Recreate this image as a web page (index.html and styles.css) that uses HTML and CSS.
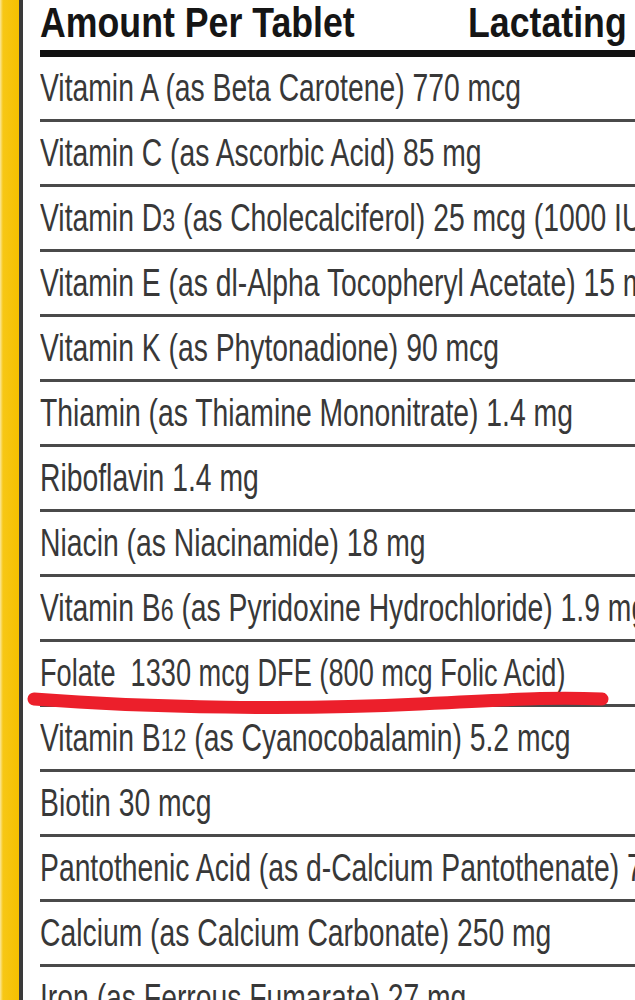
FILE: index.html
```html
<!DOCTYPE html>
<html>
<head>
  <meta charset="utf-8" />
  <title>Supplement Facts</title>
  <meta name="viewport" content="width=device-width, initial-scale=1">
  <link rel="stylesheet" href="styles.css">
</head>
<body>
  <div class="label">
    <div class="edge"></div>
    <div class="edge-rule"></div>
    <div class="panel">
      <div class="head">
        <span class="head-text">Amount Per Tablet</span>
        <span class="head-text head-right">Lactating</span>
      </div>
      <div class="row"><span class="txt">Vitamin A (as Beta Carotene) 770 mcg</span></div>
      <div class="row"><span class="txt">Vitamin C (as Ascorbic Acid) 85 mg</span></div>
      <div class="row"><span class="txt">Vitamin D<span class="sub">3</span> (as Cholecalciferol) 25 mcg (1000 IU)</span></div>
      <div class="row"><span class="txt">Vitamin E (as dl-Alpha Tocopheryl Acetate) 15 mg</span></div>
      <div class="row"><span class="txt">Vitamin K (as Phytonadione) 90 mcg</span></div>
      <div class="row"><span class="txt">Thiamin (as Thiamine Mononitrate) 1.4 mg</span></div>
      <div class="row"><span class="txt">Riboflavin 1.4 mg</span></div>
      <div class="row"><span class="txt">Niacin (as Niacinamide) 18 mg</span></div>
      <div class="row"><span class="txt">Vitamin B<span class="sub">6</span> (as Pyridoxine Hydrochloride) 1.9 mg</span></div>
      <div class="row"><span class="txt tight">Folate&nbsp; 1330 mcg DFE (800 mcg Folic Acid)</span></div>
      <div class="row"><span class="txt">Vitamin B<span class="sub">12</span> (as Cyanocobalamin) 5.2 mcg</span></div>
      <div class="row"><span class="txt">Biotin 30 mcg</span></div>
      <div class="row"><span class="txt">Pantothenic Acid (as d-Calcium Pantothenate) 7 mg</span></div>
      <div class="row"><span class="txt">Calcium (as Calcium Carbonate) 250 mg</span></div>
      <div class="row"><span class="txt">Iron (as Ferrous Fumarate) 27 mg</span></div>
    </div>
    <!-- red marker stroke under the folate row -->
    <svg class="marker" width="635" height="1000" viewBox="0 0 635 1000">
      <path d="M34 699 C 150 708, 300 710, 420 704 S 560 697, 602 699" fill="none" stroke="#ec1f2b" stroke-width="13" stroke-linecap="round"/>
    </svg>
  </div>
</body>
</html>
```

FILE: styles.css
```css
html, body {
  margin: 0px;
  padding: 0px;
  background: #fff;
}
.label {
  position: relative;
  display: flex;
  width: 635px;
  height: 1000px;
  overflow: hidden;
  font-family: "Liberation Sans", Arial, sans-serif;
}
.edge {
  width: 19px;
  flex: none;
  background: linear-gradient(to right, #fbe79a 0px, #f7c716 3px, #f5c000 100%);
}
.edge-rule {
  width: 4px;
  flex: none;
  background: #3a3a3a;
}
.panel {
  flex: 1;
  min-width: 0;
  margin-left: 17px;
  overflow: hidden;
}
.head {
  box-sizing: border-box;
  height: 57px;
  padding-top: 2px;
  display: flex;
  justify-content: space-between;
  border-bottom: 7px solid #111;
  white-space: nowrap;
}
.head-text {
  display: inline-block;
  font-size: 42px;
  line-height: 42px;
  font-weight: bold;
  color: #151515;
  transform: scaleX(0.85);
  transform-origin: left center;
}
.head-right {
  margin-right: 8px;
  transform-origin: right center;
}
.row {
  height: 62px;
  border-bottom: 3px solid #4a4a4a;
  white-space: nowrap;
}
.txt {
  display: inline-block;
  font-size: 38px;
  line-height: 62px;
  color: #383838;
  transform: scaleX(0.745);
  transform-origin: left center;
}
.txt.tight {
  transform: scaleX(0.715);
}
.sub {
  font-size: 0.82em;
}
.marker {
  position: absolute;
  left: 0;
  top: 0;
  pointer-events: none;
}
```
